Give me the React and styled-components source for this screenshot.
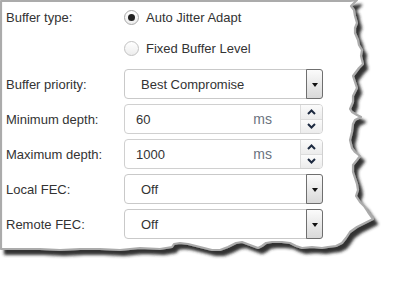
import React from 'react';
import styled, { createGlobalStyle } from 'styled-components';

const GlobalStyle = createGlobalStyle`
  html, body {
    margin: 0;
    background: #fff;
  }
  body {
    font-family: "Liberation Sans", Arial, sans-serif;
    font-size: 13px;
    color: #333;
  }
`;

const Styles = {
  Page: styled.div`
    position: relative;
    width: 394px;
    height: 283px;
    overflow: hidden;
  `,
  Paper: styled.svg`
    position: absolute;
    left: 0;
    top: 0;
  `,
  Form: styled.div`
    position: relative;
    display: flex;
    flex-direction: column;
    gap: 5px;
    padding-top: 2px;
    width: 323px;
  `,
  RadioGroup: styled.div`
    display: flex;
    flex-direction: column;
  `,
  Row: styled.div`
    display: flex;
    align-items: center;
    height: ${props => props.tall ? 31 : 30}px;
  `,
  Label: styled.span`
    width: 118px;
    padding-left: 6px;
    white-space: nowrap;
  `,
  Radio: styled.label`
    display: flex;
    align-items: center;
    gap: 7px;
  `,
  RadioDot: styled.span`
    box-sizing: border-box;
    display: flex;
    align-items: center;
    justify-content: center;
    width: 15px;
    height: 15px;
    border-radius: 50%;
    border: 1px solid ${props => props.checked ? '#a8a8a8' : '#c2c2c2'};
    background: linear-gradient(#ffffff, #ededed);
    &::after {
      content: '';
      display: ${props => props.checked ? 'block' : 'none'};
      width: 7px;
      height: 7px;
      border-radius: 50%;
      background: #222;
    }
  `,
  Select: styled.div`
    box-sizing: border-box;
    display: flex;
    align-items: stretch;
    width: 199px;
    height: 30px;
    border: 1px solid #c9c9c9;
    border-radius: 4px;
    background: #fff;
  `,
  SelectText: styled.span`
    flex: 1;
    display: flex;
    align-items: center;
    padding-left: 16px;
  `,
  DropButton: styled.span`
    box-sizing: border-box;
    display: flex;
    align-items: center;
    justify-content: center;
    width: 17px;
    margin: -1px -1px -1px 0;
    border: 1px solid #6f6f6f;
    border-radius: 0 3px 3px 0;
    background: linear-gradient(#fbfbfb, #d9d9d9);
    &::after {
      content: '';
      margin-top: 1px;
      border-left: 3px solid transparent;
      border-right: 3px solid transparent;
      border-top: 4px solid #111;
    }
  `,
  Spin: styled.div`
    box-sizing: border-box;
    display: flex;
    align-items: stretch;
    width: 199px;
    height: 30px;
    border: 1px solid #d0d0d0;
    border-radius: 4px;
    background: #fff;
    overflow: hidden;
  `,
  Value: styled.span`
    flex: 1;
    display: flex;
    align-items: center;
    padding-left: 11px;
  `,
  Unit: styled.span`
    display: flex;
    align-items: center;
    margin-right: 28px;
    color: #6a7380;
    font-size: 14px;
  `,
  Arrows: styled.div`
    display: flex;
    flex-direction: column;
    width: 21px;
    border-left: 1px solid #dcdcdc;
  `,
  Arrow: styled.span`
    flex: 1;
    display: flex;
    align-items: center;
    justify-content: center;
    background: linear-gradient(#fbfbfb, #ececec);
    & + & {
      border-top: 1px solid #dcdcdc;
    }
  `
};

const tear = [
  [1, 1], [350, 1], [357, 0], [351, 6], [354, 10], [355, 16], [357, 23], [355, 28],
  [355, 33], [358, 40], [359, 45], [362, 50], [361, 56], [363, 64], [359, 68], [353, 76],
  [355, 82], [357, 88], [353, 96], [353, 102], [350, 109], [352, 112], [357, 115], [361, 117],
  [355, 120], [353, 124], [352, 132], [350, 140], [352, 148], [355, 152], [360, 156], [357, 160],
  [353, 165], [353, 172], [355, 178], [357, 184], [358, 190], [356, 196], [360, 202], [364, 206],
  [368, 212], [373, 219], [365, 223], [357, 227], [350, 232], [346, 238], [342, 243], [336, 246],
  [328, 247], [322, 248], [312, 247], [302, 248], [296, 246], [290, 243], [282, 242], [272, 242],
  [266, 243], [262, 246], [258, 248], [250, 245], [242, 242], [236, 243], [228, 247], [220, 250],
  [212, 250], [204, 248], [196, 246], [188, 244], [180, 243], [174, 244], [172, 247], [160, 249],
  [140, 248], [120, 250], [100, 249], [80, 249], [60, 250], [40, 249], [20, 249], [1, 249]
];

const Chevron = ({ up }) => (
  <svg width="9" height="6" viewBox="0 0 9 6">
    <polyline
      points={up ? '1,5 4.5,1.5 8,5' : '1,1 4.5,4.5 8,1'}
      fill="none"
      stroke="#1d2a40"
      strokeWidth="2"
    />
  </svg>
);

const SelectField = ({ label, value }) => (
  <Styles.Row>
    <Styles.Label>{label}</Styles.Label>
    <Styles.Select>
      <Styles.SelectText>{value}</Styles.SelectText>
      <Styles.DropButton />
    </Styles.Select>
  </Styles.Row>
);

const SpinField = ({ label, value }) => (
  <Styles.Row>
    <Styles.Label>{label}</Styles.Label>
    <Styles.Spin>
      <Styles.Value>{value}</Styles.Value>
      <Styles.Unit>ms</Styles.Unit>
      <Styles.Arrows>
        <Styles.Arrow><Chevron up /></Styles.Arrow>
        <Styles.Arrow><Chevron /></Styles.Arrow>
      </Styles.Arrows>
    </Styles.Spin>
  </Styles.Row>
);

const App = () => (
  <Styles.Page>
    <GlobalStyle />
    <Styles.Paper width="394" height="283">
      <defs>
        <filter id="tear-shadow" x="-5%" y="-5%" width="115%" height="115%">
          <feDropShadow dx="4" dy="5" stdDeviation="1.4" floodColor="#262626" floodOpacity="0.95" />
        </filter>
      </defs>
      <path
        d={'M' + tear.map(p => p.join(',')).join(' L') + ' Z'}
        fill="#fff"
        stroke="#ababab"
        strokeWidth="2.2"
        strokeLinejoin="round"
        filter="url(#tear-shadow)"
      />
    </Styles.Paper>
    <Styles.Form>
      <Styles.RadioGroup>
        <Styles.Row tall>
          <Styles.Label>Buffer type:</Styles.Label>
          <Styles.Radio><Styles.RadioDot checked />Auto Jitter Adapt</Styles.Radio>
        </Styles.Row>
        <Styles.Row tall>
          <Styles.Label />
          <Styles.Radio><Styles.RadioDot />Fixed Buffer Level</Styles.Radio>
        </Styles.Row>
      </Styles.RadioGroup>
      <SelectField label="Buffer priority:" value="Best Compromise" />
      <SpinField label="Minimum depth:" value="60" />
      <SpinField label="Maximum depth:" value="1000" />
      <SelectField label="Local FEC:" value="Off" />
      <SelectField label="Remote FEC:" value="Off" />
    </Styles.Form>
  </Styles.Page>
);

export default App;
